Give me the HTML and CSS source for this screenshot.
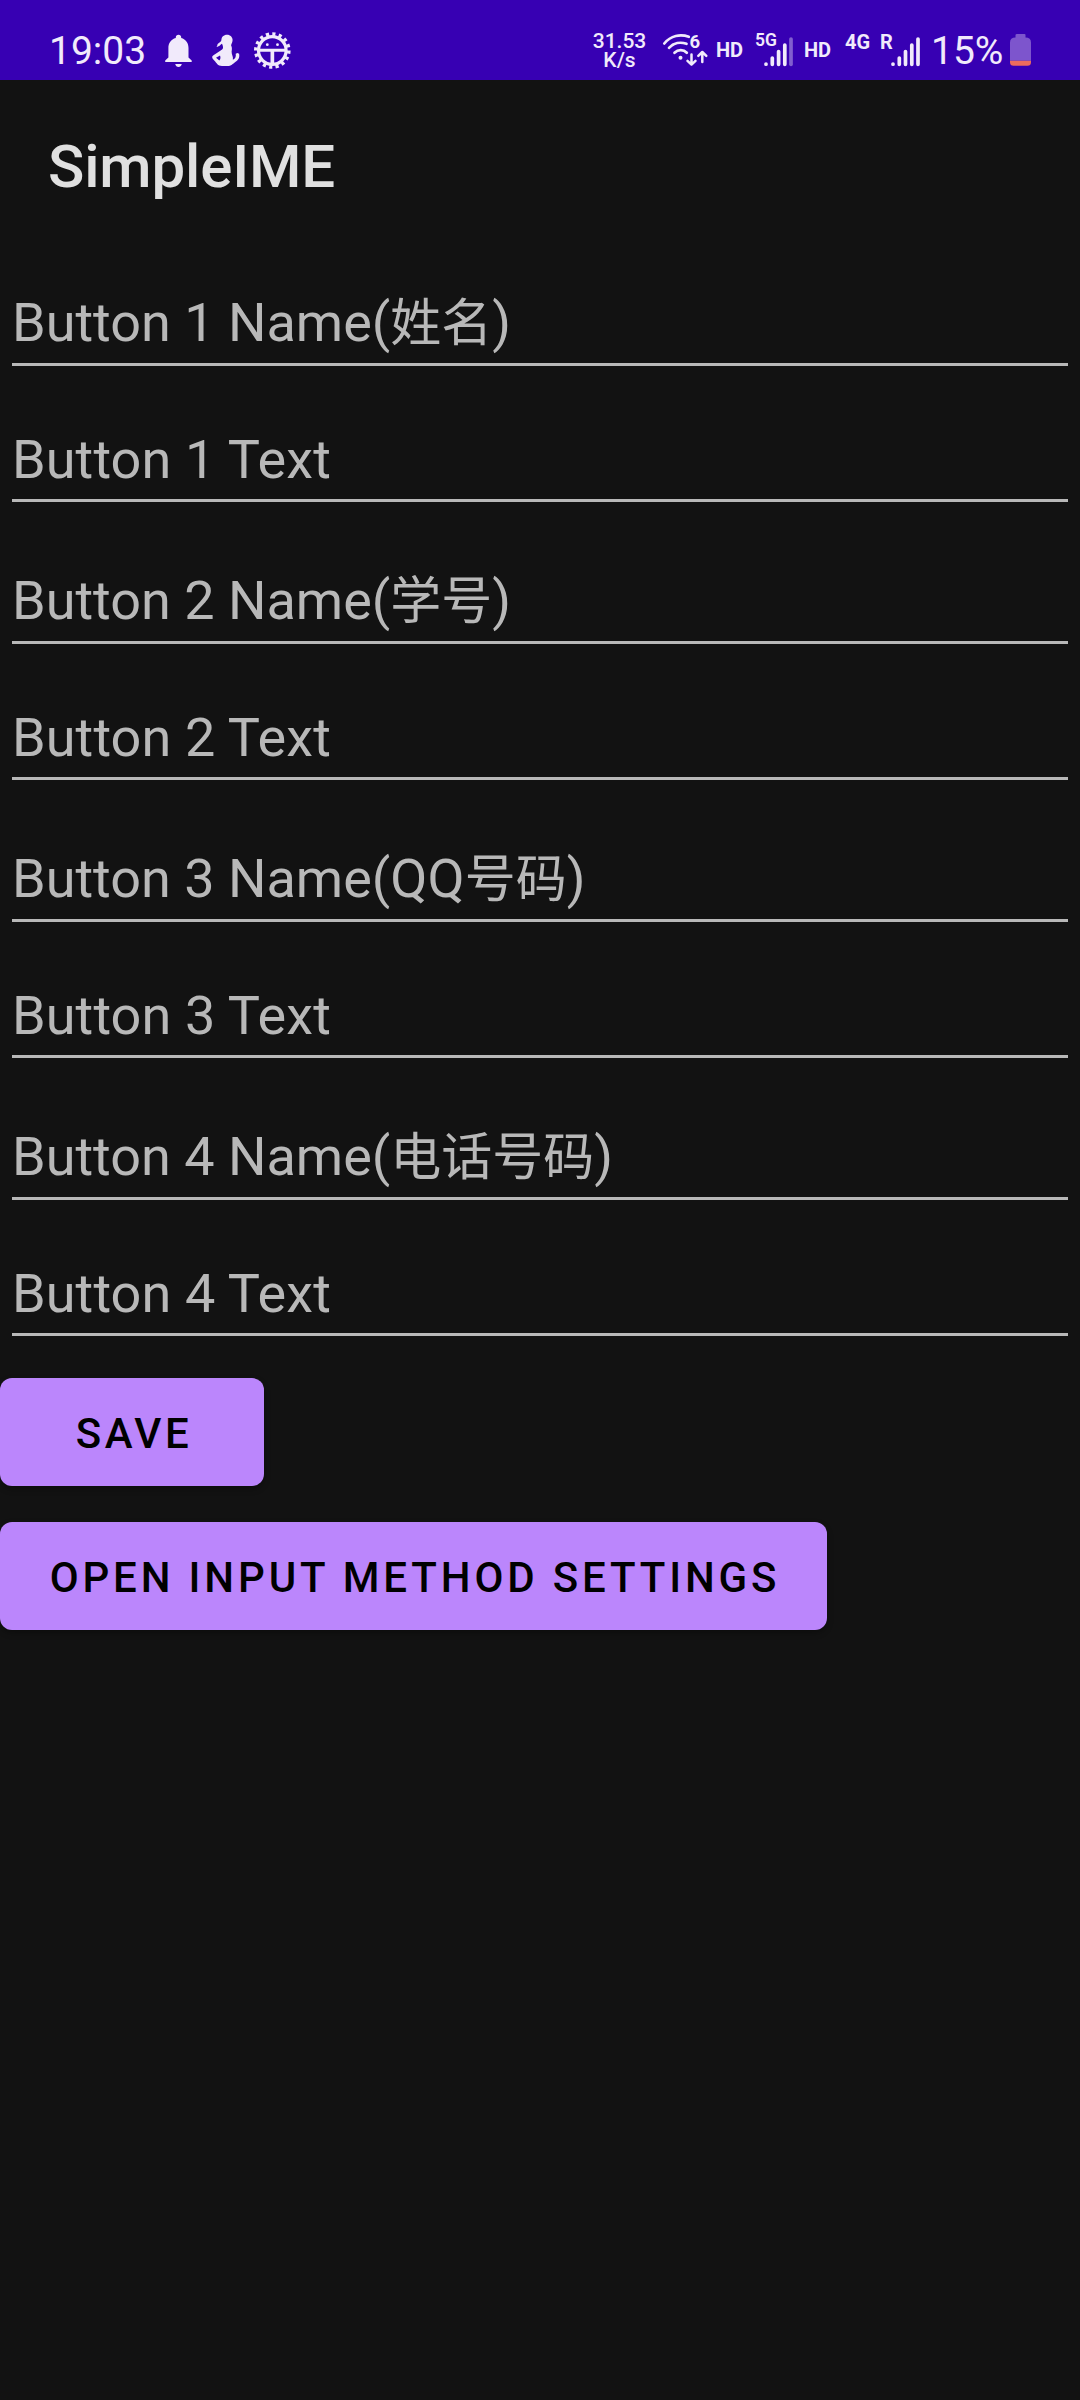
FILE: index.html
```html
<!DOCTYPE html>
<html lang="en">
<head>
<meta charset="utf-8">
<title>SimpleIME</title>
<link rel="stylesheet" href="styles.css">
</head>
<body>
<header class="status">
  <div class="status-group">
    <span class="clock">19:03</span>
    <svg class="icon" width="48" height="80" viewBox="154 0 48 80">
      <path d="M178.500 34.700c1.600 0 2.700 1.100 2.700 2.500v.8c4.700 1.200 7.300 5.300 7.300 10v9.500l3.200 3v1.500h-26.500v-1.500l3.200-3v-9.500c0-4.700 2.600-8.800 7.400-10v-.8c0-1.400 1.100-2.500 2.700-2.500zM175.200 64h6.600c-.5 2-1.600 2.900-3.300 2.900s-2.800-.9-3.300-2.900z"/>
    </svg>
    <svg class="icon" width="46" height="80" viewBox="202 0 46 80">
      <path d="M227 34.700c3.400 0 5.600 2.500 5.600 5.400 0 2.400-1.200 3.500-1.500 5.300 1.200 2 .8 4.500.5 6.200-.2 3 1.800 4.700 1.300 8.200 2.500-.8 3.300-3.400 2.800-6l1.700-.8 1.700.8c.8 4-.8 6.300-3.800 8.200-2.500 1.900-3.900 4-8 4h-5.300c-4.200 0-5.500-3-7.500-5.200-1.300-1.500-2.300-2.500-2.300-3.600 0-1.400 1-1.800 2.800-3l5.300-3.500c1.500-1 2.500-1.600 2.700-2.700.2-1.500-.4-3-1-4.300-1.700.5-2.200 2.800-5.500 3.200 1.200-1 .5-1.700 1.200-2.800.9-1.300 2.700-1.500 3.700-3.800 0-3.400 2.300-5.600 5.600-5.600z"/>
      <path class="cut" d="M216 57.800l4-2.300c.7 1.600.7 3.600-.6 5z"/>
    </svg>
    <svg class="icon" width="50" height="80" viewBox="248 0 50 80">
      <circle class="stroke" cx="272.300" cy="50.500" r="13.800" stroke-width="3.200"/>
      <circle class="stroke teeth" cx="272.300" cy="50.500" r="16.500" stroke-width="3.600" pathLength="136"/>
      <path d="M259 48.700h27v3h-11.800v13h-3.700v-13h-11.500z"/>
      <circle cx="267.300" cy="44.700" r="1.400"/><circle cx="277.500" cy="44.700" r="1.400"/>
    </svg>
  </div>
  <div class="status-group">
    <span class="speed"><span>31.53</span><span>K/s</span></span>
    <svg class="icon" width="54" height="80" viewBox="658.500 0 54 80">
      <g class="stroke" stroke-width="2.700">
        <path d="M663.800 43.500c6.500-8 16-9.700 24.500-6.700M668.500 47.800c4.700-5 11.500-6.200 17.500-4M674 52.700c3.600-3.400 9-3.400 12.300 0"/>
      </g>
      <circle cx="680" cy="57.700" r="2"/>
      <g class="stroke" stroke-width="2.500"><path d="M691 54.500v10M687 60.800l4 3.800 4-3.800M701.800 62v-9.800M697.800 55.800l4-3.800 4 3.800"/></g>
      <text x="689" y="47.700" font-size="18.500" font-weight="700">6</text>
    </svg>
    <span class="hd">HD</span>
    <svg class="icon" width="50" height="80" viewBox="752 0 50 80">
      <text x="755" y="46.300" font-size="17.500" font-weight="600">5G</text>
      <g class="stroke" stroke-width="3.700"><path d="M766 64v.2M772.300 58v6.300M778.600 51.500v12.800M784.800 45v19.300"/><path opacity=".4" d="M791 39v25.300"/></g>
    </svg>
    <span class="hd hd-second">HD</span>
    <svg class="icon" width="87" height="80" viewBox="842 0 87 80">
      <text x="845" y="48.700" font-size="20" font-weight="700">4G</text>
      <text x="880" y="48.700" font-size="20" font-weight="700">R</text>
      <g class="stroke" stroke-width="3.700"><path d="M893 64v.2M899.300 58v6.300M905.500 51.500v12.800M911.800 45v19.300M918 39v25.300"/></g>
    </svg>
    <span class="percent">15%</span>
    <svg class="icon" width="74" height="80" viewBox="1006 0 74 80">
      <path class="battery" d="M1017 34h7.500q1 0 1 1v2.500q5.500 0 5.500 5v18.200h-21v-18.200q0-5 5.500-5v-2.500q0-1 1.500-1z"/>
      <path class="charge" d="M1010 60.700h21v1.500q0 3.600-3.600 3.600h-13.800q-3.600 0-3.600-3.600z"/>
    </svg>
  </div>
</header>
<h1 class="title">SimpleIME</h1>
<main class="form">
  <div class="field name">Button 1 Name(<span class="cjk">姓名</span>)</div>
  <div class="field">Button 1 Text</div>
  <div class="field name">Button 2 Name(<span class="cjk">学号</span>)</div>
  <div class="field">Button 2 Text</div>
  <div class="field name">Button 3 Name(QQ<span class="cjk">号码</span>)</div>
  <div class="field">Button 3 Text</div>
  <div class="field name">Button 4 Name(<span class="cjk">电话号码</span>)</div>
  <div class="field">Button 4 Text</div>
  <button class="button save">SAVE</button>
  <button class="button settings">OPEN INPUT METHOD SETTINGS</button>
</main>
</body>
</html>
```
FILE: styles.css
```css
* { box-sizing: border-box; }
body {
  margin: 0;
  width: 1080px;
  min-height: 2400px;
  background: #121212;
  font-family: Roboto, "Noto Sans CJK SC", sans-serif;
}
.status {
  display: flex;
  justify-content: space-between;
  height: 80px;
  background: #3700b3;
  color: #f1eafb;
}
.status-group { display: flex; }
.status-group > * { flex: none; }
.icon { display: block; fill: #f1eafb; }
.stroke { fill: none; stroke: #f1eafb; stroke-linecap: round; stroke-linejoin: round; }
.teeth { stroke-linecap: butt; stroke-dasharray: 4.200 4.300; }
.cut { fill: #3700b3; }
.battery { fill: #7d55cd; }
.charge { fill: #ec6b5e; }
.clock, .percent { font-size: 39px; line-height: 46px; padding-top: 28px; white-space: nowrap; }
.clock { width: 154px; padding-left: 49px; }
.percent { width: 77px; padding-left: 2px; }
.speed {
  display: flex;
  flex-direction: column;
  align-items: center;
  width: 78px;
  padding: 32px 1px 0 0;
  font-size: 21px;
  font-weight: 500;
  line-height: 19px;
}
.hd { width: 39px; padding: 38px 0 0 3px; font-size: 20px; font-weight: 700; line-height: 24px; }
.hd-second { width: 40px; padding-left: 2px; }
.title {
  height: 168px;
  margin: 0;
  padding: 52px 48px 0;
  color: #e0e0e0;
  font-size: 60px;
  font-weight: 500;
  line-height: 70px;
  letter-spacing: -.15px;
}
.form { display: flex; flex-direction: column; align-items: flex-start; }
.field {
  width: 1056px;
  height: 100px;
  margin: 0 12px 36px;
  border-bottom: 3px solid #b8b8b8;
  color: #b8b8b8;
  font-size: 54px;
  line-height: 64px;
  letter-spacing: .1px;
  padding-top: 26px;
}
.name { height: 106px; padding-top: 31px; letter-spacing: 0; }
.cjk { font-size: 51px; line-height: 1; }
.form .name:first-child { margin-top: 12px; }
.button {
  height: 108px;
  border: 0;
  border-radius: 12px;
  padding: 4px 0 0 4px;
  background: #bb86fc;
  color: #000;
  font: 500 42px/50px Roboto, sans-serif;
  letter-spacing: 3.850px;
  white-space: nowrap;
  box-shadow: 0 3px 6px rgba(0, 0, 0, .3);
}
.save { width: 264px; margin-top: 6px; letter-spacing: 3.500px; }
.settings { width: 827px; margin-top: 36px; padding-left: 3px; }
```
